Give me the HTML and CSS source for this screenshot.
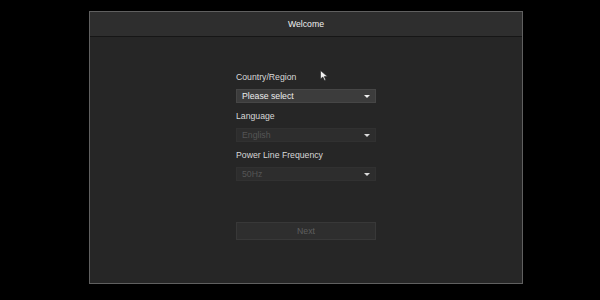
FILE: index.html
```html
<!DOCTYPE html>
<html lang="en">
<head>
    <meta charset="UTF-8">
    <meta name="viewport" content="width=device-width, initial-scale=1.0">
    <title>Welcome</title>
    <link rel="stylesheet" href="styles.css">
</head>
<body>
    <div class="dialog">
        <div class="dialog-header">Welcome</div>

        <div class="dialog-body">
            <div class="form">
                <!-- Country -->
                <div class="field">
                    <div class="label">Country/Region</div>
                    <div class="combo">
                        <span>Please select</span>
                        <span class="arrow"></span>
                    </div>
                </div>

                <!-- Language -->
                <div class="field">
                    <div class="label">Language</div>
                    <div class="combo disabled">
                        <span>English</span>
                        <span class="arrow"></span>
                    </div>
                </div>

                <!-- Power line frequency -->
                <div class="field">
                    <div class="label">Power Line Frequency</div>
                    <div class="combo disabled">
                        <span>50Hz</span>
                        <span class="arrow"></span>
                    </div>
                </div>

                <div class="btn">Next</div>
            </div>
        </div>

        <svg class="cursor" width="10" height="12" viewBox="0 0 10 12">
            <path d="M0.5 0.5 L0.5 9 L2.8 7 L4.5 10.5 L5.8 9.9 L4.2 6.6 L7.5 6.6 Z" fill="#f2f2f2" stroke="#222" stroke-width="0.6"/>
        </svg>
    </div>
</body>
</html>
```

FILE: styles.css
```css
* {
    margin: 0;
    padding: 0;
    box-sizing: border-box;
}

body {
    background: #000;
    font-family: 'Liberation Sans', Arial, sans-serif;
    font-size: 8.7px;
    color: #d8d8d8;
}

.dialog {
    position: relative;
    width: 434px;
    height: 273px;
    margin: 11px 0 0 89px;
    border: 1px solid #606060;
    background: #262626;
    display: flex;
    flex-direction: column;
}

.dialog-header {
    height: 25px;
    line-height: 24px;
    text-align: center;
    color: #f0f0f0;
    background: #2e2e2e;
    border-bottom: 1px solid #161616;
}

.dialog-body {
    flex: 1;
    display: flex;
    justify-content: center;
    padding-top: 34px;
}

.form {
    width: 140px;
    display: flex;
    flex-direction: column;
}

.field {
    display: flex;
    flex-direction: column;
    gap: 6px;
    margin-bottom: 7px;
}

.label {
    height: 12px;
    line-height: 12px;
}

.combo {
    height: 14px;
    display: flex;
    align-items: center;
    justify-content: space-between;
    padding: 0 5px 0 5px;
    background: #3c3c3c;
    border: 1px solid #464646;
    color: #ececec;
}

.combo.disabled {
    background: #2d2d2d;
    border-color: #313131;
    color: #555;
}

.arrow {
    width: 0;
    height: 0;
    margin-top: 1px;
    border-left: 3.5px solid transparent;
    border-right: 3.5px solid transparent;
    border-top: 3.5px solid #f0f0f0;
}

.combo.disabled .arrow {
    border-top-color: #dcdcdc;
}

.btn {
    margin-top: 34px;
    height: 18px;
    line-height: 16px;
    text-align: center;
    background: #2e2e2e;
    border: 1px solid #383838;
    color: #5e5e5e;
}

.cursor {
    position: absolute;
    left: 230px;
    top: 58px;
}
```
